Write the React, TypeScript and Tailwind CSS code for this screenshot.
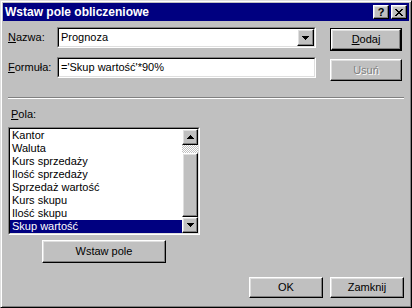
import React from "react";

const raised =
  "border border-t-white border-l-white border-r-black border-b-black shadow-[inset_-1px_-1px_0_#808080,inset_1px_1px_0_#dfdfdf] bg-[#c0c0c0]";
const sunkenOuter =
  "border border-t-[#808080] border-l-[#808080] border-r-white border-b-white";
const sunkenInner =
  "border border-t-black border-l-black border-r-[#dfdfdf] border-b-[#dfdfdf]";

function UpArrow() {
  return (
    <svg width="7" height="4" viewBox="0 0 7 4" shapeRendering="crispEdges">
      <path d="M3 0h1v1h-1z M2 1h3v1h-3z M1 2h5v1h-5z M0 3h7v1h-7z" fill="#000" />
    </svg>
  );
}

function DownArrow() {
  return (
    <svg width="7" height="4" viewBox="0 0 7 4" shapeRendering="crispEdges">
      <path d="M0 0h7v1h-7z M1 1h5v1h-5z M2 2h3v1h-3z M3 3h1v1h-1z" fill="#000" />
    </svg>
  );
}

function CloseGlyph() {
  return (
    <svg width="8" height="7" viewBox="0 0 8 7" shapeRendering="crispEdges">
      <path
        d="M0 0h2v1h-2z M6 0h2v1h-2z M1 1h2v1h-2z M5 1h2v1h-2z M2 2h4v1h-4z M3 3h2v1h-2z M2 4h4v1h-4z M1 5h2v1h-2z M5 5h2v1h-2z M0 6h2v1h-2z M6 6h2v1h-2z"
        fill="#000"
      />
    </svg>
  );
}

const items = [
  "Kantor",
  "Waluta",
  "Kurs sprzedaży",
  "Ilość sprzedaży",
  "Sprzedaż wartość",
  "Kurs skupu",
  "Ilość skupu",
  "Skup wartość",
];

export default function App() {
  return (
    <div className="w-[412px] h-[308px] bg-[#c0c0c0] border border-t-[#dfdfdf] border-l-[#dfdfdf] border-r-black border-b-black shadow-[inset_1px_1px_0_#fff,inset_-1px_-1px_0_#808080] p-[2px] flex flex-col font-['Liberation_Sans',Arial,sans-serif] text-[11px] leading-[13px] text-black">
      {/* Title bar */}
      <div className="h-[18px] bg-[#000080] flex items-center pl-[2px] pr-[2px]">
        <span className="text-white font-bold text-[12px] leading-[14px] whitespace-nowrap">
          Wstaw pole obliczeniowe
        </span>
        <div className="ml-auto flex gap-[2px]">
          <div className={`${raised} w-[16px] h-[14px] flex items-center justify-center`}>
            <span className="font-bold text-[11px] leading-[11px] mt-[1px]">?</span>
          </div>
          <div className={`${raised} w-[16px] h-[14px] flex items-center justify-center`}>
            <CloseGlyph />
          </div>
        </div>
      </div>

      {/* Body */}
      <div className="flex flex-col pl-[5px] pr-[5px] pt-[6px]">
        {/* Row 1 */}
        <div className="flex items-start">
          <div className="w-[49px] h-[21px] flex items-center">
            <span>
              <span className="underline">N</span>azwa:
            </span>
          </div>
          <div className={`${sunkenOuter} w-[259px] h-[21px]`}>
            <div className={`${sunkenInner} bg-white h-full flex items-center pl-[2px]`}>
              <span>Prognoza</span>
              <div className={`${raised} ml-auto w-[17px] h-[17px] flex items-center justify-center`}>
                <DownArrow />
              </div>
            </div>
          </div>
          <div className="ml-[14px] mt-[1px] w-[72px] h-[23px] border border-black">
            <div className={`${raised} w-full h-full flex items-center justify-center`}>
              <span>
                <span className="underline">D</span>odaj
              </span>
            </div>
          </div>
        </div>

        {/* Row 2 */}
        <div className="flex items-start mt-[6px]">
          <div className="w-[49px] h-[21px] flex items-center">
            <span>
              <span className="underline">F</span>ormuła:
            </span>
          </div>
          <div className={`${sunkenOuter} w-[259px] h-[21px]`}>
            <div className={`${sunkenInner} bg-white h-full flex items-center pl-[2px]`}>
              <span className="whitespace-nowrap">='Skup wartość'*90%</span>
            </div>
          </div>
          <div className={`${raised} ml-[14px] mt-[2px] w-[72px] h-[22px] flex items-center justify-center`}>
            <span className="text-[#808080] [text-shadow:1px_1px_0_#fff]">Usuń</span>
          </div>
        </div>

        {/* Separator */}
        <div className="mt-[16px] w-[396px] h-[2px] border-t border-t-[#808080] border-b border-b-white" />

        {/* Pola */}
        <div className="mt-[9px] h-[13px] pl-[3px]">
          <span className="underline">P</span>ola:
        </div>

        <div className={`${sunkenOuter} mt-[6px] w-[192px] h-[108px]`}>
          <div className={`${sunkenInner} bg-white h-full flex`}>
            <div className="flex-1 flex flex-col">
              {items.map((it, i) => (
                <div
                  key={it}
                  className={
                    i === items.length - 1
                      ? "h-[13px] leading-[13px] pl-[2px] whitespace-nowrap bg-[#000080] text-white"
                      : "h-[13px] leading-[13px] pl-[2px] whitespace-nowrap"
                  }
                >
                  {it}
                </div>
              ))}
            </div>
            <div className="w-[16px] flex flex-col">
              <div className={`${raised} h-[16px] flex items-center justify-center`}>
                <UpArrow />
              </div>
              <div className="h-[8px] bg-[image:repeating-conic-gradient(#fff_0_25%,#c0c0c0_0_50%)] [background-size:2px_2px]" />
              <div className={`${raised} h-[64px]`} />
              <div className={`${raised} h-[16px] flex items-center justify-center`}>
                <DownArrow />
              </div>
            </div>
          </div>
        </div>

        <div className={`${raised} mt-[5px] ml-[34px] w-[124px] h-[23px] flex items-center justify-center`}>
          <span>Wstaw pole</span>
        </div>

        {/* Bottom buttons */}
        <div className="mt-[14px] flex justify-end gap-[7px]">
          <div className={`${raised} w-[74px] h-[21px] flex items-center justify-center`}>
            <span>OK</span>
          </div>
          <div className={`${raised} w-[74px] h-[21px] flex items-center justify-center`}>
            <span>Zamknij</span>
          </div>
        </div>
      </div>
    </div>
  );
}
